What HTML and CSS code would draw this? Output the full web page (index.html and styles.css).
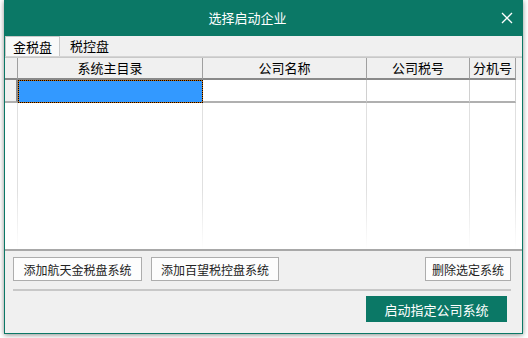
FILE: index.html
```html
<!DOCTYPE html>
<html>
<head>
<meta charset="utf-8">
<link rel="stylesheet" href="styles.css">
</head>
<body>
<div class="window">
  <div class="titlebar">
    <div class="title">选择启动企业</div>
    <div class="close">
      <svg width="12" height="12" viewBox="0 0 12 12"><path d="M1 1L11 11M11 1L1 11" stroke="#fff" stroke-width="1.3" fill="none"/></svg>
    </div>
  </div>
  <div class="tabs">
    <div class="tab active">金税盘</div>
    <div class="tab">税控盘</div>
  </div>
  <div class="grid">
    <div class="row head">
      <div class="c c0"></div>
      <div class="c c1">系统主目录</div>
      <div class="c c2">公司名称</div>
      <div class="c c3">公司税号</div>
      <div class="c c4">分机号</div>
    </div>
    <div class="row data">
      <div class="c c0"></div>
      <div class="c c1 sel"></div>
      <div class="c c2"></div>
      <div class="c c3"></div>
      <div class="c c4"></div>
    </div>
    <div class="row empty">
      <div class="c c0"></div>
      <div class="c c1"></div>
      <div class="c c2"></div>
      <div class="c c3"></div>
      <div class="c c4"></div>
    </div>
  </div>
  <div class="actions">
    <button class="btn b1">添加航天金税盘系统</button>
    <button class="btn b2">添加百望税控盘系统</button>
    <div class="spacer"></div>
    <button class="btn b3">删除选定系统</button>
  </div>
  <div class="sep"></div>
  <div class="footer">
    <button class="primary">启动指定公司系统</button>
  </div>
</div>
</body>
</html>
```
FILE: styles.css
```css
* { box-sizing: border-box; }
html, body { margin: 0; padding: 0; background: #ffffff; }
body {
  width: 528px;
  height: 338px;
  padding: 0 0 0 4px;
  font-family: "Noto Sans CJK SC", "Noto Sans", sans-serif;
  font-size: 12px;
  color: #000;
}
.window {
  width: 519px;
  height: 334px;
  border: 1px solid #0b7866;
  border-top: none;
  background: #f0f0f0;
  box-shadow: 0 1px 5px rgba(0,0,0,0.45);
  display: flex;
  flex-direction: column;
}
.titlebar {
  height: 36px;
  background: #0b7866;
  margin: 0 -1px;
  display: flex;
  align-items: center;
  color: #fff;
  flex: none;
}
.title {
  flex: 1;
  text-align: center;
  font-size: 13px;
  line-height: 36px;
}
.close {
  width: 31px;
  height: 36px;
  display: flex;
  align-items: center;
  justify-content: center;
  margin-right: 1px;
}
.close svg { display: block; }
.tabs {
  height: 21px;
  display: flex;
  align-items: stretch;
  flex: none;
  border-bottom: 1px solid #d4d4d4;
}
.tab {
  padding: 0 8px;
  line-height: 20px;
  font-size: 13px;
}
.tab.active {
  background: #f9f9f9;
  border: 1px solid #c8c8c8;
  border-bottom: none;
  width: 55px;
  padding: 0 0 0 7px;
}
.tab:not(.active) { padding-left: 10px; }
.grid {
  height: 194px;
  flex: none;
  background: #fff;
  border-top: 1px solid #c8c8c8;
  border-bottom: 2px solid #a8a8a8;
  display: flex;
  flex-direction: column;
}
.row { display: flex; }
.c { flex: none; }
.c0 { width: 13px; }
.c1 { width: 185px; }
.c2 { width: 164px; }
.c3 { width: 103px; }
.c4 { width: 46px; }
.head { height: 22px; background: #f0f0f0; }
.head .c {
  border-right: 1px solid #a0a0a0;
  border-bottom: 2px solid #8a8a8a;
  text-align: center;
  line-height: 20px;
  font-size: 13px;
}
.head .c0 { background: #f0f0f0; }
.data { height: 23px; }
.data .c {
  border-right: 1px solid #d0d0d0;
  border-bottom: 2px solid #b0b0b0;
}
.data .c0 { background: #f0f0f0; border-right: 2px solid #8a8a8a; }
.data .c1.sel {
  border: 1px dotted #000;
  background: linear-gradient(#3399ff, #3399ff) padding-box, #d06a00 border-box;
}
.empty { flex: 1; }
.empty .c {
  border-right: 1px solid transparent;
  border-image: linear-gradient(#e0e0e0 60%, #ffffff) 1;
  border-image-slice: 0 1 0 0;
  border-image-width: 0 1px 0 0;
}
.actions {
  display: flex;
  align-items: center;
  height: 38px;
  padding: 6px 11px 8px 8px;
  flex: none;
}
.btn {
  font-family: "Noto Sans CJK SC", "Noto Sans", sans-serif;
  font-size: 12px;
  color: #222;
  background: #fdfdfd;
  border: 1px solid #adadad;
  height: 24px;
  padding: 0;
  margin: 0;
}
.b1 { width: 129px; }
.b2 { width: 128px; margin-left: 9px; }
.b3 { width: 86px; }
.spacer { flex: 1; }
.sep {
  height: 2px;
  background: #c8c8c8;
  margin: 0 11px 0 8px;
  flex: none;
}
.footer {
  display: flex;
  justify-content: flex-end;
  padding: 5px 15px 0 0;
}
.primary {
  font-family: "Noto Sans CJK SC", "Noto Sans", sans-serif;
  font-size: 13px;
  width: 141px;
  height: 26px;
  background: #0b7866;
  color: #fff;
  border: none;
  padding: 0;
}
```
